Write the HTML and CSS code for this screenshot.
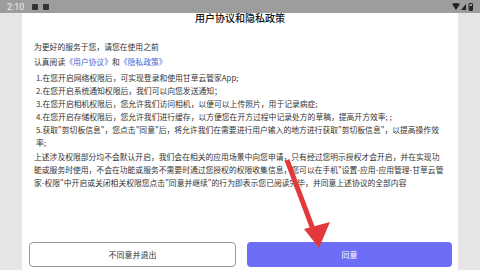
FILE: index.html
```html
<!DOCTYPE html>
<html lang="zh">
<head>
    <meta charset="UTF-8">
    <meta name="viewport" content="width=device-width, initial-scale=1.0">
    <title>用户协议和隐私政策</title>
    <link rel="stylesheet" href="styles.css">
</head>
<body>

    <div class="statusbar">
        <div class="status-left">
            <span class="clock">2:10</span>
            <span class="sq"></span>
            <span class="sq"></span>
        </div>
        <div class="status-right">
            <svg width="22" height="8" viewBox="0 0 22 8">
                <path d="M0 1 Q4 -1 8 1 L4 7 Z" fill="#222"/>
                <path d="M9 7 L14 1 L14 7 Z" fill="#222"/>
                <rect x="17" y="0.5" width="3.5" height="7" rx="0.6" fill="none" stroke="#222" stroke-width="1"/>
                <rect x="17.5" y="3" width="2.5" height="4.5" fill="#222"/>
            </svg>
        </div>
    </div>

    <div class="screen">
        <div class="side"></div>
        <div class="dialog">
            <h1 class="titulo">用户协议和隐私政策</h1>

            <div class="conteudo">
                <p class="linha">为更好的服务于您，请您在使用之前</p>
                <p class="linha links">认真阅读<a>《用户协议》</a>和<a>《隐私政策》</a></p>

                <div class="lista">
                    <p>1.在您开启网络权限后，可实现登录和使用甘草云管家App;</p>
                    <p>2.在您开启系统通知权限后，我们可以向您发送通知；</p>
                    <p>3.在您开启相机权限后，您允许我们访问相机，以便可以上传照片，用于记录病症;</p>
                    <p>4.在您开启存储权限后，您允许我们进行缓存，以方便您在开方过程中记录处方的草稿，提高开方效率; ;</p>
                    <p>5.获取"剪切板信息"，您点击"同意"后，将允许我们在需要进行用户输入的地方进行获取"剪切板信息"，以提高操作效率;</p>
                </div>

                <p class="aviso">上述涉及权限部分均不会默认开启，我们会在相关的应用场景中向您申请，只有经过您明示授权才会开启，并在实现功能或服务时使用，不会在功能或服务不需要时通过您授权的权限收集信息，您可以在手机"设置-应用-应用管理-甘草云管家-权限"中开启或关闭相关权限您点击"同意并继续"的行为即表示您已阅读完毕，并同意上述协议的全部内容</p>
            </div>

            <div class="botoes">
                <button class="btn-sair">不同意并退出</button>
                <button class="btn-ok">同意</button>
            </div>
        </div>
        <div class="side"></div>
    </div>

    <svg class="seta" width="480" height="270" viewBox="0 0 480 270">
        <line x1="287" y1="160" x2="314" y2="232" stroke="#e23a3a" stroke-width="5"/>
        <polygon points="319,248 304,229 330,222" fill="#e23a3a"/>
    </svg>

</body>
</html>
```

FILE: styles.css
```css
body {
    margin: 0;
    width: 480px;
    height: 270px;
    overflow: hidden;
    font-family: "Noto Sans CJK SC", "Noto Sans", sans-serif;
    background-color: #e6e6e6;
    position: relative;
}
.statusbar {
    height: 13px;
    background-color: #9d9d9d;
    display: flex;
    justify-content: space-between;
    align-items: center;
    padding: 0 6px 0 7px;
}
.status-left {
    display: flex;
    align-items: center;
    gap: 5px;
}
.clock {
    font-family: "Roboto", sans-serif;
    font-size: 9px;
    color: #eeeeee;
    margin-right: 3px;
}
.sq {
    width: 6px;
    height: 6px;
    background-color: #333;
    border-radius: 1px;
}
.status-right svg {
    display: block;
}
.screen {
    display: flex;
    height: 257px;
}
.side {
    width: 22px;
    background-color: #e6e6e6;
}
.dialog {
    width: 436px;
    background-color: #ffffff;
    display: flex;
    flex-direction: column;
}
.titulo {
    margin: 0;
    font-size: 10px;
    line-height: 10px;
    font-weight: 500;
    text-align: center;
    color: #111;
}
.conteudo {
    padding: 17px 12px 0 12px;
    font-size: 7.8px;
    line-height: 13px;
    color: #333;
}
.conteudo p {
    margin: 0;
}
.links {
    margin-top: 2px !important;
}
.links a {
    color: #4a63d6;
}
.lista {
    margin-top: 3px;
    padding-left: 2px;
}
.aviso {
    margin-top: 1px !important;
}
.botoes {
    margin-top: auto;
    display: flex;
    gap: 11px;
    padding: 0 6px 3px 7px;
}
.botoes button {
    flex: 1;
    height: 25px;
    border-radius: 4px;
    font-family: "Noto Sans CJK SC", sans-serif;
    font-size: 8px;
}
.btn-sair {
    background-color: #ffffff;
    border: 1px solid #9a9a9a;
    color: #333;
}
.btn-ok {
    background-color: #6d6df7;
    border: none;
    color: #ffffff;
}
.seta {
    position: absolute;
    left: 0;
    top: 0;
}
```
